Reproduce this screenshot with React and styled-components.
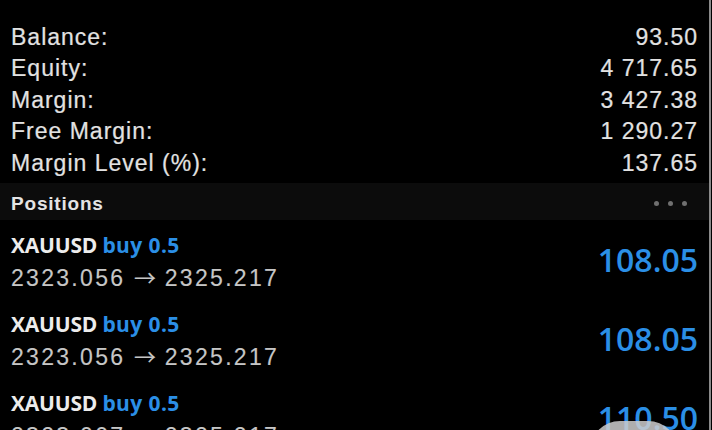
import React from "react";
import styled, { createGlobalStyle } from "styled-components";

const GlobalStyle = createGlobalStyle`
  html, body {
    margin: 0;
    padding: 0;
    background: #000;
    overflow: hidden;
  }
`;

const Screen = styled.div`
  position: relative;
  width: 709px;
  height: 430px;
  overflow: hidden;
  background: #000;
  border-right: 2px solid #8a8a8a;
  font-family: "Liberation Sans", Arial, sans-serif;
`;

const Summary = styled.div`
  display: flex;
  flex-direction: column;
  padding: 21.5px 11px 0 11px;
`;

const SummaryRow = styled.div`
  display: flex;
  justify-content: space-between;
  align-items: center;
  height: 31.5px;
  line-height: 31.5px;
  font-size: 23px;
  letter-spacing: 1px;
  color: #e2e2e2;
  -webkit-text-stroke: 0.2px #e2e2e2;
`;

const SectionHeader = styled.div`
  display: flex;
  align-items: center;
  justify-content: space-between;
  margin-top: 4px;
  height: 37px;
  padding: 4px 22px 0 11px;
  box-sizing: border-box;
  background: #0c0c0c;
`;

const SectionTitle = styled.span`
  font-size: 19px;
  font-weight: 700;
  letter-spacing: 0.8px;
  color: #e4e4e4;
`;

const Dots = styled.div`
  display: flex;
  gap: 9px;
`;

const Dot = styled.span`
  width: 5px;
  height: 5px;
  border-radius: 50%;
  background: #707070;
`;

const PositionRow = styled.div`
  display: flex;
  align-items: center;
  justify-content: space-between;
  height: 79px;
  padding: 10px 11px 0 11px;
  box-sizing: border-box;
  flex-shrink: 0;
`;

const Info = styled.div`
  display: flex;
  flex-direction: column;
  align-self: flex-start;
`;

const Title = styled.div`
  font-family: "Open Sans", "Liberation Sans", sans-serif;
  font-size: 21px;
  font-weight: 700;
  line-height: 30px;
  color: #ececec;
  letter-spacing: -0.2px;
`;

const Side = styled.span`
  color: #2b8fe6;
  letter-spacing: 0.4px;
`;

const Prices = styled.div`
  margin-top: 1px;
  font-size: 23px;
  line-height: 30px;
  letter-spacing: 2.3px;
  color: #c6c6c6;
  -webkit-text-stroke: 0.15px #c6c6c6;
`;

const Arrow = styled.span`
  font-family: "Noto Sans CJK SC", "DejaVu Sans", sans-serif;
  font-size: 22px;
  letter-spacing: 0;
`;

const Profit = styled.div`
  font-family: "Open Sans", "Liberation Sans", sans-serif;
  font-size: 32px;
  font-weight: 600;
  color: #2b8fe6;
  margin-bottom: 11px;
`;

const Overlay = styled.div`
  position: absolute;
  left: 590px;
  top: 421px;
  width: 88px;
  height: 30px;
  border-radius: 44px 44px 0 0;
  background: rgba(205, 205, 205, 0.85);
`;

const summary = [
  ["Balance:", "93.50"],
  ["Equity:", "4 717.65"],
  ["Margin:", "3 427.38"],
  ["Free Margin:", "1 290.27"],
  ["Margin Level (%):", "137.65"],
];

const positions = [
  { symbol: "XAUUSD", side: "buy 0.5", open: "2323.056", current: "2325.217", profit: "108.05" },
  { symbol: "XAUUSD", side: "buy 0.5", open: "2323.056", current: "2325.217", profit: "108.05" },
  { symbol: "XAUUSD", side: "buy 0.5", open: "2323.007", current: "2325.217", profit: "110.50" },
];

export default function App() {
  return (
    <>
      <GlobalStyle />
      <Screen>
        <Summary>
          {summary.map(([label, value]) => (
            <SummaryRow key={label}>
              <span>{label}</span>
              <span>{value}</span>
            </SummaryRow>
          ))}
        </Summary>
        <SectionHeader>
          <SectionTitle>Positions</SectionTitle>
          <Dots>
            <Dot />
            <Dot />
            <Dot />
          </Dots>
        </SectionHeader>
        {positions.map((p, i) => (
          <PositionRow key={i}>
            <Info>
              <Title>
                {p.symbol} <Side>{p.side}</Side>
              </Title>
              <Prices>
                {p.open} <Arrow>→</Arrow> {p.current}
              </Prices>
            </Info>
            <Profit>{p.profit}</Profit>
          </PositionRow>
        ))}
        <Overlay />
      </Screen>
    </>
  );
}
